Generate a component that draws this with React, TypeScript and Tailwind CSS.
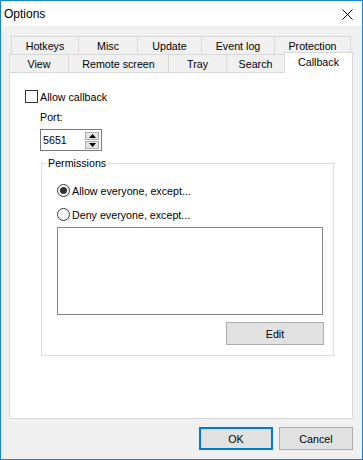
import React from 'react';

const FONT = { fontFamily: '"Liberation Sans", Arial, sans-serif' };

const BACK_ROW: { label: string; w: string; last?: boolean }[] = [
  { label: 'Hotkeys', w: 'w-[67px]' },
  { label: 'Misc', w: 'w-[59px]' },
  { label: 'Update', w: 'w-[64px]' },
  { label: 'Event log', w: 'w-[73px]' },
  { label: 'Protection', w: 'w-[77px]', last: true },
];

const FRONT_ROW: { label: string; w: string }[] = [
  { label: 'View', w: 'w-[59px]' },
  { label: 'Remote screen', w: 'w-[100px]' },
  { label: 'Tray', w: 'w-[58px]' },
  { label: 'Search', w: 'w-[58px]' },
];

function Radio({ checked, label }: { checked?: boolean; label: string }) {
  return (
    <div className="flex items-center h-[13px] ml-[15px]">
      <span className="w-[13px] h-[13px] rounded-full border border-[#333333] bg-white flex items-center justify-center">
        {checked && <span className="w-[7px] h-[7px] rounded-full bg-[#333333]" />}
      </span>
      <span className="ml-[2px]">{label}</span>
    </div>
  );
}

function Button({ label, primary, className = '' }: { label: string; primary?: boolean; className?: string }) {
  return (
    <div
      className={`h-[23px] flex items-center justify-center bg-[#e1e1e1] ${
        primary ? 'border-2 border-[#0078d7]' : 'border border-[#adadad]'
      } ${className}`}
    >
      {label}
    </div>
  );
}

export default function App() {
  return (
    <div
      style={FONT}
      className="w-[363px] h-[460px] border border-[#1883d7] bg-[#f0f0f0] flex flex-col text-[10.7px] leading-[14px] text-black select-none"
    >
      {/* title bar */}
      <div className="h-[25px] bg-white flex items-center justify-between pl-[3px] pr-[9px] shrink-0">
        <span className="text-[12px]">Options</span>
        <svg width="11" height="11" viewBox="0 0 11 11" className="mt-[1px]">
          <path d="M0.5 0.5 L10.5 10.5 M10.5 0.5 L0.5 10.5" stroke="#000" strokeWidth="1" />
        </svg>
      </div>

      {/* tabs */}
      <div className="flex mt-[10px] ml-[10px]">
        {BACK_ROW.map((t) => (
          <div
            key={t.label}
            className={`${t.w} h-[18px] border-t border-l ${t.last ? 'border-r' : ''} border-[#d9d9d9] flex items-center justify-center`}
          >
            {t.label}
          </div>
        ))}
      </div>
      <div className="flex ml-[8px]">
        {FRONT_ROW.map((t) => (
          <div
            key={t.label}
            className={`${t.w} h-[18px] border-t border-l border-[#d9d9d9] flex items-center justify-center`}
          >
            {t.label}
          </div>
        ))}
        <div className="w-[69px] h-[21px] -mt-[2px] -mb-[1px] relative z-10 bg-white border-t border-x border-[#d9d9d9] flex justify-center pt-[2px]">
          Callback
        </div>
      </div>

      {/* panel */}
      <div className="ml-[8px] w-[344px] h-[347px] border border-[#d9d9d9] bg-white flex flex-col shrink-0">
        <div className="flex items-center h-[13px] mt-[17px] ml-[15px]">
          <span className="w-[13px] h-[13px] border border-[#333333] bg-white" />
          <span className="ml-[2px]">Allow callback</span>
        </div>
        <div className="mt-[7px] ml-[30px]">Port:</div>
        <div className="mt-[5px] ml-[30px] w-[62px] h-[22px] border border-[#7a7a7a] flex items-center justify-between pl-[2px] pr-[2px]">
          <span>5651</span>
          <div className="flex flex-col gap-[1px]">
            <div className="w-[14px] h-[8px] bg-[#e5e5e5] border border-[#adadad] flex items-center justify-center">
              <svg width="7" height="4" viewBox="0 0 7 4">
                <path d="M0 4 L3.5 0 L7 4 Z" fill="#000" />
              </svg>
            </div>
            <div className="w-[14px] h-[8px] bg-[#e5e5e5] border border-[#adadad] flex items-center justify-center">
              <svg width="7" height="4" viewBox="0 0 7 4">
                <path d="M0 0 L7 0 L3.5 4 Z" fill="#000" />
              </svg>
            </div>
          </div>
        </div>

        <fieldset className="mt-[6px] ml-[31px] w-[293px] border border-[#dcdcdc] pb-[10px] flex flex-col">
          <legend className="ml-[5px] px-[1px] leading-[12px]">Permissions</legend>
          <div className="mt-[15px]">
            <Radio checked label="Allow everyone, except..." />
          </div>
          <div className="mt-[11px]">
            <Radio label="Deny everyone, except..." />
          </div>
          <div className="mt-[6px] ml-[15px] w-[266px] h-[88px] border border-[#828790] bg-white" />
          <Button label="Edit" className="mt-[7px] ml-[184px] w-[98px]" />
        </fieldset>
      </div>

      {/* footer */}
      <div className="flex justify-end gap-[6px] mt-[8px] pr-[9px]">
        <Button label="OK" primary className="w-[74px]" />
        <Button label="Cancel" className="w-[74px]" />
      </div>
    </div>
  );
}
